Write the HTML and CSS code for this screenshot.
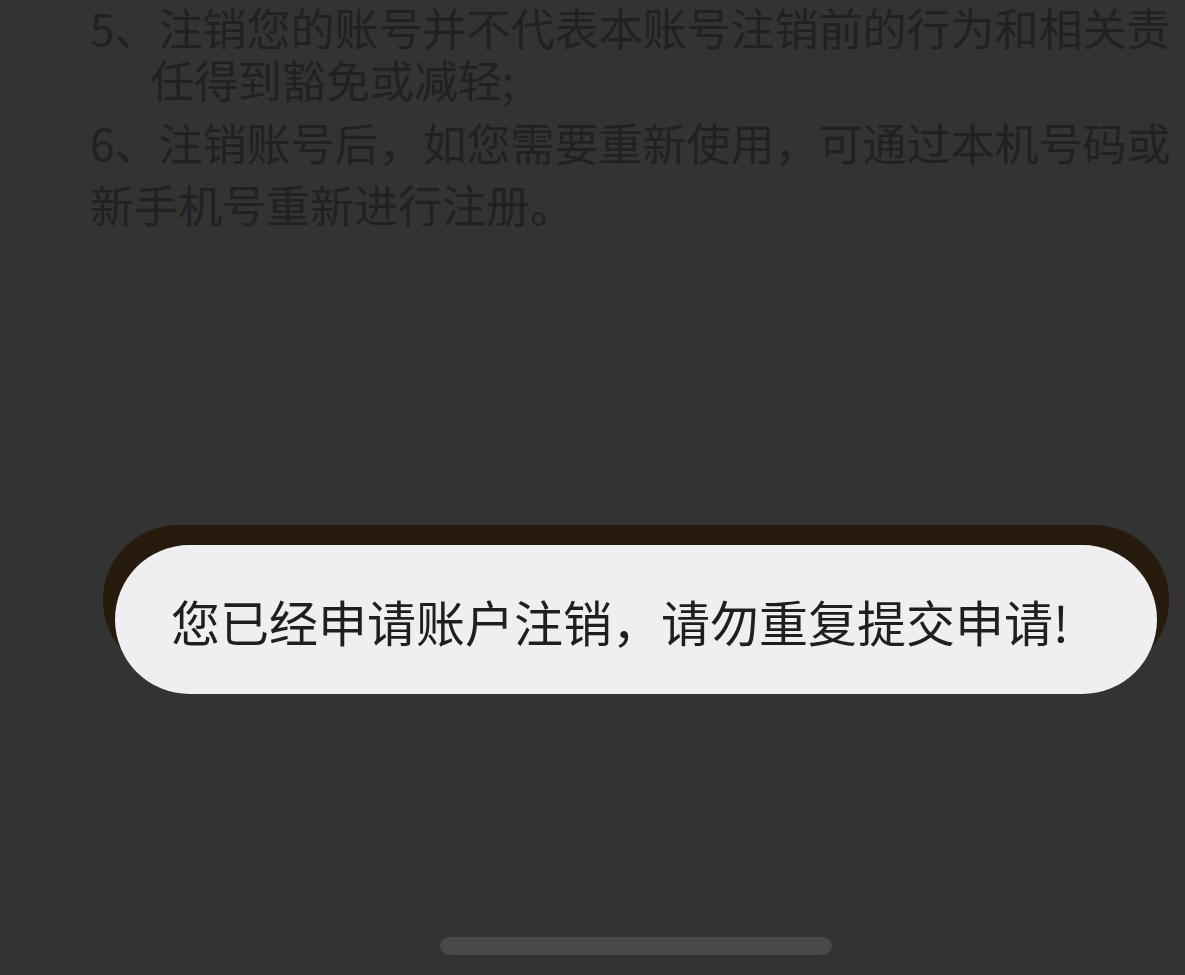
FILE: index.html
```html
<!DOCTYPE html>
<html lang="zh-CN">
<head>
    <meta charset="UTF-8">
    <meta name="viewport" content="width=device-width, initial-scale=1.0">
    <title>注销账号</title>
    <link rel="stylesheet" href="styles.css">
</head>
<body>
    <div class="notes">
        <p class="item hang">5、注销您的账号并不代表本账号注销前的行为和相关责任得到豁免或减轻;</p>
        <p class="item">6、注销账号后，如您需要重新使用，可通过本机号码或新手机号重新进行注册。</p>
    </div>

    <div class="toast">
        <span>您已经申请账户注销，请勿重复提交申请!</span>
    </div>

    <div class="home-bar"></div>
</body>
</html>
```

FILE: styles.css
```css
body {
    margin: 0;
    width: 1185px;
    height: 975px;
    background-color: #333333;
    font-family: "Noto Sans CJK SC", "Noto Sans", sans-serif;
    overflow: hidden;
    position: relative;
}

.notes {
    width: 1084px;
    padding-left: 90px;
    padding-top: 1px;
    color: #212121;
    font-size: 44px;
}

.item {
    margin: 0;
    line-height: 62px;
}

.hang {
    line-height: 52px;
    padding-left: 60px;
    text-indent: -60px;
    margin-bottom: 6px;
}

.toast {
    position: absolute;
    left: 115px;
    top: 545px;
    width: 1042px;
    height: 149px;
    border-radius: 75px;
    background-color: #efeff1;
    display: flex;
    align-items: center;
    padding-left: 56px;
    box-sizing: border-box;
    color: #1d1f22;
    font-size: 49px;
}

.toast::before {
    content: "";
    position: absolute;
    left: -12px;
    right: -12px;
    top: -20px;
    height: 150px;
    border-radius: 75px;
    background-color: #261b0d;
    z-index: -1;
}

.toast span {
    position: relative;
    top: 1px;
}

.home-bar {
    position: absolute;
    left: 440px;
    top: 937px;
    width: 392px;
    height: 18px;
    border-radius: 9px;
    background-color: #494949;
}
```
